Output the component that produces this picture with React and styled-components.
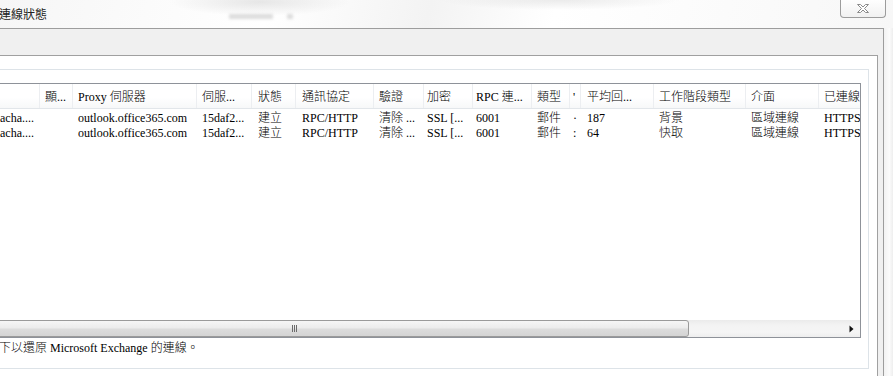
import React from 'react';
import styled, { createGlobalStyle } from 'styled-components';

const Global = createGlobalStyle`
  html, body { margin: 0; padding: 0; background: #ffffff; }
  body { width: 893px; height: 376px; overflow: hidden; }
  * { box-sizing: border-box; }
`;

const Screen = styled.div`
  width: 893px;
  height: 376px;
  overflow: hidden;
  display: flex;
  flex-direction: column;
  background: #fafafa;
  font-family: "Liberation Serif", "Noto Sans CJK TC", serif;
  font-size: 12px;
  font-weight: 300;
  color: #000;
`;

const TitleBar = styled.div`
  height: 28px;
  flex: none;
  display: flex;
  align-items: flex-start;
  background:
    radial-gradient(ellipse 90px 14px at 260px 2px, rgba(200,200,200,0.45), rgba(255,255,255,0) 100%),
    radial-gradient(ellipse 120px 10px at 560px 0px, rgba(205,205,205,0.4), rgba(255,255,255,0) 100%),
    linear-gradient(105deg, #f6f6f6 0%, #ffffff 30%, #f3f3f3 48%, #ffffff 62%, #f7f7f7 100%);
`;

const Title = styled.div`
  margin: 5px 0 0 -1px;
  font-family: "Noto Sans CJK TC", "Noto Sans", sans-serif;
  font-size: 12px;
  font-weight: 400;
  line-height: 17px;
  color: #222;
`;

const GlassGhost = styled.div`
  margin: 14px 0 0 ${p => p.$gap}px;
  width: ${p => p.$w}px;
  height: 5px;
  background: #cfcfcf;
  filter: blur(1.5px);
  opacity: 0.7;
`;

const Spacer = styled.div`
  flex: 1;
`;

const CloseButton = styled.div`
  width: 46px;
  height: 19px;
  margin: -1px 7px 0 0;
  border: 1px solid #9c9c9c;
  border-top: none;
  border-radius: 0 0 4px 4px;
  background: linear-gradient(#ffffff, #f1f1f1);
  display: flex;
  align-items: center;
  justify-content: center;
`;

const Body = styled.div`
  flex: 1;
  display: flex;
  min-height: 0;
`;

const Frame = styled.div`
  width: 884px;
  flex: none;
  border-top: 1px solid #9d9d9d;
  border-right: 1px solid #9d9d9d;
  background: #f0f0f0;
  padding: 26px 5px 0 0;
  display: flex;
  flex-direction: column;
`;

const GlassEdge = styled.div`
  flex: 1;
  background: linear-gradient(90deg, #f2f2f2, #fbfbfb 60%, #eeeeee);
`;

const Panel = styled.div`
  flex: 1;
  background: #ffffff;
  border-top: 1px solid #a0a0a0;
  border-right: 1px solid #a0a0a0;
  padding: 13px 8px 0 0;
`;

const Group = styled.div`
  height: 300px;
  border-top: 1px solid #dde3e8;
  border-right: 1px solid #dde3e8;
  border-bottom: 1px solid #dde3e8;
  padding: 13px 7px 0 0;
  display: flex;
  flex-direction: column;
`;

const ListView = styled.div`
  height: 255px;
  flex: none;
  border-top: 1px solid #8e9299;
  border-right: 1px solid #8e9299;
  border-bottom: 1px solid #8e9299;
  display: flex;
  flex-direction: column;
  overflow: hidden;
`;

const COLS = '40px 33px 124px 55px 44px 78px 50px 49px 59px 38px 11px 73px 92px 73px 80px';

const HeaderRow = styled.div`
  height: 25px;
  flex: none;
  display: grid;
  grid-template-columns: ${COLS};
  border-bottom: 1px solid #e2e6ea;
  background: linear-gradient(#ffffff 0%, #ffffff 55%, #f7f8f9 100%);
`;

const HeaderCell = styled.div`
  display: flex;
  align-items: center;
  padding: 3px 0 0 ${p => p.$pad}px;
  border-right: 1px solid #eceef1;
  white-space: nowrap;
  overflow: hidden;
  line-height: 15px;
`;

const Rows = styled.div`
  flex: 1;
  padding-top: 2px;
  background: #ffffff;
`;

const Row = styled.div`
  height: 15px;
  display: grid;
  grid-template-columns: ${COLS};
`;

const Cell = styled.div`
  padding-left: ${p => p.$pad}px;
  line-height: 15px;
  white-space: nowrap;
  overflow: hidden;
`;

const ScrollBar = styled.div`
  height: 17px;
  flex: none;
  display: flex;
  background: linear-gradient(#ebebeb, #f3f3f3 30%, #f5f5f5 70%, #eeeeee);
  overflow: hidden;
`;

const Track = styled.div`
  flex: 1;
  display: flex;
  overflow: hidden;
`;

const Thumb = styled.div`
  flex: none;
  height: 17px;
  border: 1px solid #9a9a9a;
  border-radius: 3px;
  background: linear-gradient(#f6f6f6 0%, #ececec 45%, #dcdcdc 55%, #d4d4d4 100%);
  display: flex;
  align-items: center;
  justify-content: center;
`;

const ArrowButton = styled.div`
  width: 17px;
  flex: none;
  display: flex;
  align-items: center;
  justify-content: center;
`;

const StatusText = styled.div`
  height: 30px;
  flex: none;
  padding: 3px 0 0 0;
  margin-left: -1px;
  line-height: 15px;
  white-space: nowrap;
`;

const columns = [
  { h: '', pad: 0 },
  { h: '顯...', pad: 5 },
  { h: 'Proxy 伺服器', pad: 5 },
  { h: '伺服...', pad: 5 },
  { h: '狀態', pad: 6 },
  { h: '通訊協定', pad: 6 },
  { h: '驗證', pad: 5 },
  { h: '加密', pad: 3 },
  { h: 'RPC 連...', pad: 3 },
  { h: '類型', pad: 5 },
  { h: "'", pad: 3 },
  { h: '平均回...', pad: 6 },
  { h: '工作階段類型', pad: 5 },
  { h: '介面', pad: 5 },
  { h: '已連線', pad: 5 },
];

const rows = [
  ['acha....', '', 'outlook.office365.com', '15daf2...', '建立', 'RPC/HTTP', '清除 ...', 'SSL [...', '6001', '郵件', '·', '187', '背景', '區域連線', 'HTTPS'],
  ['acha....', '', 'outlook.office365.com', '15daf2...', '建立', 'RPC/HTTP', '清除 ...', 'SSL [...', '6001', '郵件', ':', '64', '快取', '區域連線', 'HTTPS'],
];

const scroll = { offset: -99, width: 788 };

const CloseGlyph = () => (
  <svg width="14" height="11" viewBox="0 0 14 11">
    <path
      d="M1.5 1.5 H4.5 L7 4 L9.5 1.5 H12.5 L8.5 5.5 L12.5 9.5 H9.5 L7 7 L4.5 9.5 H1.5 L5.5 5.5 Z"
      fill="#ffffff"
      stroke="#8a8a8a"
      strokeWidth="1"
      strokeLinejoin="round"
    />
  </svg>
);

const Gripper = () => (
  <svg width="8" height="7" viewBox="0 0 8 7">
    <path d="M1.5 0 V7 M3.5 0 V7 M5.5 0 V7" stroke="#6b6b6b" strokeWidth="1" />
  </svg>
);

const RightArrow = () => (
  <svg width="5" height="8" viewBox="0 0 5 8">
    <path d="M0.5 0.5 L4.5 4 L0.5 7.5 Z" fill="#111" />
  </svg>
);

export default function App() {
  return (
    <>
      <Global />
      <Screen>
        <TitleBar>
          <Title>連線狀態</Title>
          <GlassGhost $gap={182} $w={44} />
          <GlassGhost $gap={14} $w={6} />
          <Spacer />
          <CloseButton>
            <CloseGlyph />
          </CloseButton>
        </TitleBar>
        <Body>
          <Frame>
            <Panel>
              <Group>
                <ListView>
                  <HeaderRow>
                    {columns.map((c, i) => (
                      <HeaderCell key={i} $pad={c.pad}>{c.h}</HeaderCell>
                    ))}
                  </HeaderRow>
                  <Rows>
                    {rows.map((r, ri) => (
                      <Row key={ri}>
                        {r.map((v, ci) => (
                          <Cell key={ci} $pad={columns[ci].pad}>{v}</Cell>
                        ))}
                      </Row>
                    ))}
                  </Rows>
                  <ScrollBar>
                    <Track>
                      <Thumb style={{ marginLeft: scroll.offset, width: scroll.width }}>
                        <Gripper />
                      </Thumb>
                    </Track>
                    <ArrowButton>
                      <RightArrow />
                    </ArrowButton>
                  </ScrollBar>
                </ListView>
                <StatusText>下以還原 Microsoft Exchange 的連線。</StatusText>
              </Group>
            </Panel>
          </Frame>
          <GlassEdge />
        </Body>
      </Screen>
    </>
  );
}
